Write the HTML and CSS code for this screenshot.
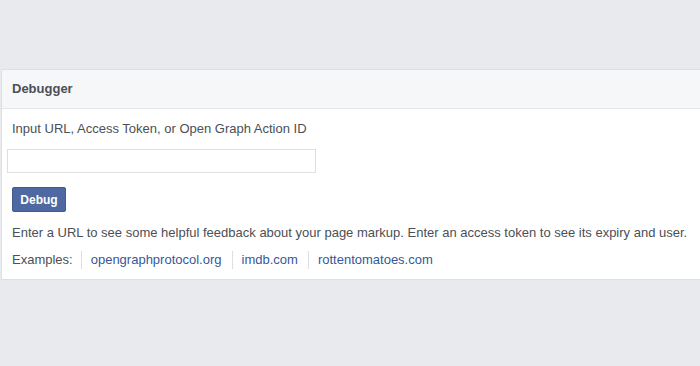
FILE: index.html
```html
<!DOCTYPE html>
<html lang="en">
<head>
    <meta charset="UTF-8">
    <title>Debugger</title>
    <link rel="stylesheet" href="styles.css">
</head>
<body>
    <div class="debugger-panel">
        <div class="panel-header">Debugger</div>
        <div class="panel-body">
            <label class="input-label" for="q">Input URL, Access Token, or Open Graph Action ID</label>
            <input class="debug-input" id="q" type="text">
            <button class="debug-button">Debug</button>
            <p class="help-text">Enter a URL to see some helpful feedback about your page markup. Enter an access token to see its expiry and user.</p>
            <div class="examples">
                <span class="examples-label">Examples:</span>
                <a href="#" class="example-link">opengraphprotocol.org</a>
                <a href="#" class="example-link">imdb.com</a>
                <a href="#" class="example-link">rottentomatoes.com</a>
            </div>
        </div>
    </div>
</body>
</html>
```

FILE: styles.css
```css
* {
    margin: 0;
    padding: 0;
    box-sizing: border-box;
}

body {
    background: #e9eaed;
    font-family: "Liberation Sans", Arial, sans-serif;
    color: #4b4f56;
    padding-top: 69px;
    padding-left: 1px;
}

.debugger-panel {
    background: #fff;
    border: 1px solid #dddfe2;
    border-right: none;
    border-radius: 2px 0 0 2px;
}

.panel-header {
    background: #f6f7f9;
    border-bottom: 1px solid #e5e6e9;
    height: 39px;
    line-height: 38px;
    padding-left: 10px;
    font-size: 13px;
    font-weight: bold;
    color: #4b4f56;
}

.panel-body {
    padding: 11px 10px 10px;
    display: flex;
    flex-direction: column;
    align-items: flex-start;
}

.input-label {
    font-size: 13px;
    line-height: 18px;
    margin-bottom: 11px;
}

.debug-input {
    width: 309px;
    height: 24px;
    margin-left: -5px;
    border: 1px solid #dddfe2;
    background: #fff;
    margin-bottom: 14px;
}

.debug-button {
    width: 54px;
    height: 25px;
    background: #4e69a2;
    border: 1px solid #435a8b;
    border-radius: 2px;
    color: #fff;
    font-family: inherit;
    font-size: 12px;
    font-weight: bold;
    margin-bottom: 12px;
}

.help-text {
    font-size: 13px;
    line-height: 18px;
    margin-bottom: 9px;
}

.examples {
    display: flex;
    align-items: center;
    font-size: 13px;
    line-height: 18px;
}

.examples-label {
    padding-right: 8px;
}

.example-link {
    color: #365899;
    text-decoration: none;
    border-left: 1px solid #dddfe2;
    padding: 0 10px 0 9px;
}
```
